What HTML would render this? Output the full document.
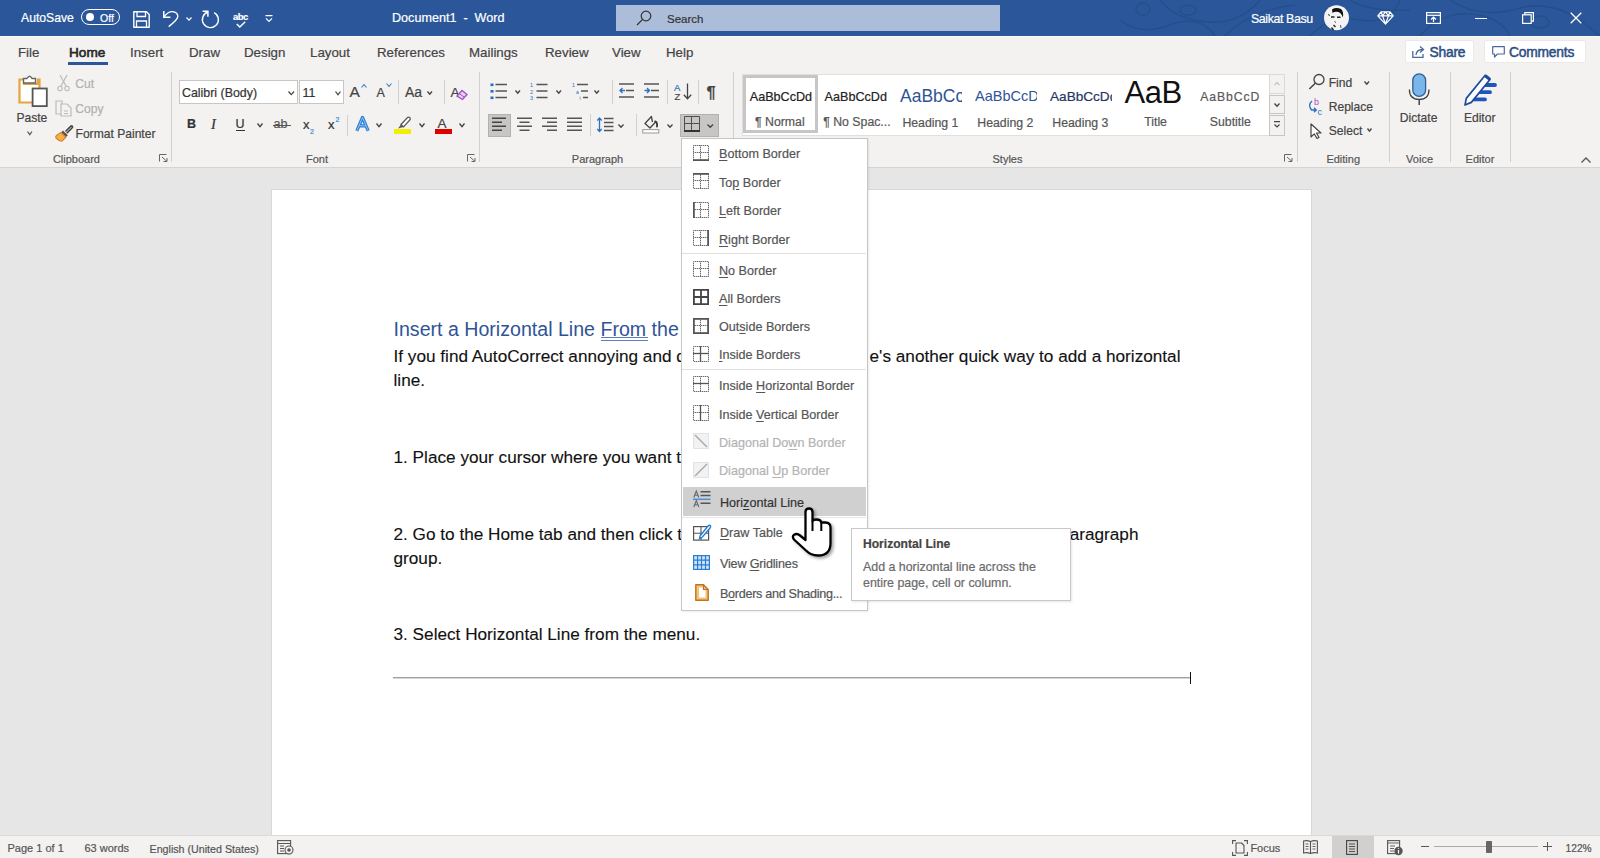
<!DOCTYPE html>
<html><head><meta charset="utf-8"><style>
html,body{margin:0;padding:0;}
body{width:1600px;height:858px;position:relative;overflow:hidden;background:#e6e6e6;font-family:"Liberation Sans",sans-serif;}
.t{position:absolute;white-space:nowrap;line-height:1;-webkit-text-stroke-width:0.2px;}
svg{overflow:visible;}
</style></head><body>
<div style="position:absolute;left:0px;top:0px;width:1600px;height:36px;background:#2b579a"></div>
<svg style="position:absolute;left:1120px;top:0px;" width="480" height="36" viewBox="0 0 480 36" fill="none"><g stroke="#1f4a86" stroke-width="1.5" fill="none" opacity="0.6"><ellipse cx="23" cy="9" rx="7" ry="6"/><ellipse cx="68" cy="10" rx="8" ry="5"/><path d="M0 20 Q20 36 50 25 Q80 14 95 36"/><path d="M40 0 Q55 20 90 22 Q120 24 140 0"/><path d="M105 36 Q130 10 175 5"/><path d="M190 36 Q210 15 240 20 Q270 25 280 0"/><path d="M300 36 Q320 12 350 14 Q380 16 390 36"/><path d="M330 0 Q360 20 400 8 Q430 0 460 20 Q470 28 480 36"/><ellipse cx="420" cy="22" rx="9" ry="6"/><path d="M230 0 Q250 12 290 10"/></g></svg>
<div style="position:absolute;left:0px;top:36px;width:1600px;height:131px;background:#f3f2f1"></div>
<div style="position:absolute;left:0px;top:36px;width:1600px;height:1px;background:#fbfbfb"></div>
<div style="position:absolute;left:0px;top:167px;width:1600px;height:1px;background:#d6d4d2"></div>
<div style="position:absolute;left:0px;top:168px;width:1600px;height:667px;background:#e6e6e6"></div>
<div style="position:absolute;left:272px;top:190px;width:1039px;height:645px;background:#fff;box-shadow:0 0 0 1px #d8d8d8"></div>
<div style="position:absolute;left:0px;top:835px;width:1600px;height:23px;background:#f3f2f1"></div>
<div class="t" style="left:21px;top:11.77px;font-size:12.2px;color:#fff;">AutoSave</div>
<div style="position:absolute;left:81px;top:8.5px;width:39px;height:16.5px;border:1.5px solid #fff;border-radius:9px;box-sizing:border-box"></div>
<div style="position:absolute;left:85.5px;top:12.8px;width:8px;height:8px;background:#fff;border-radius:50%"></div>
<div class="t" style="left:100px;top:12.61px;font-size:10.5px;color:#fff;">Off</div>
<div class="t" style="left:392px;top:11.63px;font-size:12.6px;color:#fff;">Document1&nbsp;&nbsp;-&nbsp;&nbsp;Word</div>
<div style="position:absolute;left:616px;top:5px;width:384px;height:26px;background:#acbdd9"></div>
<div class="t" style="left:667px;top:13.77px;font-size:11.5px;color:#333;">Search</div>
<div class="t" style="left:1251px;top:13.00px;font-size:12.4px;color:#fff;letter-spacing:-0.4px;">Saikat Basu</div>
<div class="t" style="left:18px;top:45.94px;font-size:13.3px;color:#444;">File</div>
<div class="t" style="left:130px;top:45.94px;font-size:13.3px;color:#444;">Insert</div>
<div class="t" style="left:189px;top:45.94px;font-size:13.3px;color:#444;">Draw</div>
<div class="t" style="left:244px;top:45.94px;font-size:13.3px;color:#444;">Design</div>
<div class="t" style="left:310px;top:45.94px;font-size:13.3px;color:#444;">Layout</div>
<div class="t" style="left:377px;top:45.94px;font-size:13.3px;color:#444;">References</div>
<div class="t" style="left:469px;top:45.94px;font-size:13.3px;color:#444;">Mailings</div>
<div class="t" style="left:545px;top:45.94px;font-size:13.3px;color:#444;">Review</div>
<div class="t" style="left:612px;top:45.94px;font-size:13.3px;color:#444;">View</div>
<div class="t" style="left:666px;top:45.94px;font-size:13.3px;color:#444;">Help</div>
<div class="t" style="left:69px;top:45.69px;font-size:13.6px;color:#262626;-webkit-text-stroke-width:0.6px;">Home</div>
<div style="position:absolute;left:68px;top:62px;width:40px;height:3px;background:#2b579a"></div>
<svg style="position:absolute;left:18px;top:75px;" width="30" height="32" viewBox="0 0 30 32" fill="none"><path d="M1.5 4.5 H6 V9 H20 V4.5 H21.5 V27.5 H1.5 Z" fill="#fff" stroke="#e8a33d" stroke-width="2.2"/>
<path d="M5.5 3.5 H9 Q11.5 -1 14 3.5 H17.5 V8 H5.5 Z" fill="#fff" stroke="#666" stroke-width="1.4"/>
<rect x="14.6" y="13.5" width="14.2" height="17.6" fill="#fff" stroke="#555" stroke-width="1.8"/></svg>
<div class="t" style="left:16.4px;top:112.06px;font-size:12.1px;color:#444;">Paste</div>
<svg style="position:absolute;left:27px;top:131px;" width="5.5" height="4" viewBox="0 0 5.5 4" fill="none"><path d="M0.5 0.5 L2.75 3.7 L5.0 0.5" stroke="#555" stroke-width="1.2"/></svg>
<svg style="position:absolute;left:57px;top:74px;" width="13" height="18" viewBox="0 0 13 18" fill="none"><path d="M3 1 L9 12 M10 1 L4 12" stroke="#bbb" stroke-width="1.2"/><circle cx="3" cy="14.5" r="2.2" stroke="#bbb" stroke-width="1.1"/><circle cx="10" cy="14.5" r="2.2" stroke="#bbb" stroke-width="1.1"/></svg>
<div class="t" style="left:75.3px;top:78.26px;font-size:12.1px;color:#b0b0b0;">Cut</div>
<svg style="position:absolute;left:55px;top:100px;" width="17" height="17" viewBox="0 0 17 17" fill="none"><path d="M1 1 H7 V14 H1 Z" stroke="#bbb" stroke-width="1.2"/><path d="M6 4 H12 L16 8 V16 H6 Z" fill="#f3f2f1" stroke="#bbb" stroke-width="1.2"/><path d="M9 11 H13 M9 13.5 H13" stroke="#bbb" stroke-width="1"/></svg>
<div class="t" style="left:75.3px;top:102.76px;font-size:12.1px;color:#b0b0b0;">Copy</div>
<svg style="position:absolute;left:55px;top:124.5px;" width="18" height="17" viewBox="0 0 18 17" fill="none"><path d="M10.5 6.5 L15.8 1.2 Q17 0.5 17.5 1.5 Q17.8 2.3 17 3 L11.8 8.2" stroke="#444" stroke-width="1.6" fill="none"/><path d="M8 5.5 L12.8 10.3 L10.8 12.3 L6 7.5 Z" fill="#555"/><path d="M6 7.5 L10.8 12.3 L7 16 Q4.5 16.5 1 13 Q0.3 11.5 1.5 10.5 Z" fill="#f7b04a" stroke="#d9822b" stroke-width="1.2" stroke-linejoin="round"/></svg>
<div class="t" style="left:75.5px;top:128.46px;font-size:12.1px;color:#444;">Format Painter</div>
<div class="t" style="left:52.9px;top:154.39px;font-size:11px;color:#555;">Clipboard</div>
<svg style="position:absolute;left:158.5px;top:154px;" width="9" height="8" viewBox="0 0 9 8" fill="none"><path d="M0.5 7.5 V0.5 H7.5" stroke="#666" stroke-width="1"/><path d="M3 3 L8 7.5 M8 4 V7.5 H4.5" stroke="#666" stroke-width="1"/></svg>
<div style="position:absolute;left:171px;top:72px;width:1px;height:90px;background:#d2d0ce"></div>
<div style="position:absolute;left:179px;top:80px;width:118.5px;height:24px;background:#fff;border:1px solid #c8c6c4;box-sizing:border-box"></div>
<div class="t" style="left:182px;top:86.80px;font-size:12.4px;color:#333;">Calibri (Body)</div>
<svg style="position:absolute;left:288px;top:91px;" width="6.5" height="4" viewBox="0 0 6.5 4" fill="none"><path d="M0.5 0.5 L3.25 3.7 L6.0 0.5" stroke="#444" stroke-width="1.2"/></svg>
<div style="position:absolute;left:299px;top:80px;width:45px;height:24px;background:#fff;border:1px solid #c8c6c4;box-sizing:border-box"></div>
<div class="t" style="left:302.5px;top:86.80px;font-size:12.4px;color:#333;">11</div>
<svg style="position:absolute;left:335px;top:91px;" width="6" height="4" viewBox="0 0 6 4" fill="none"><path d="M0.5 0.5 L3.0 3.7 L5.5 0.5" stroke="#444" stroke-width="1.2"/></svg>
<div class="t" style="left:349.5px;top:84.18px;font-size:15.5px;color:#444;">A</div>
<svg style="position:absolute;left:361px;top:83.5px;" width="6" height="4" viewBox="0 0 6 4" fill="none"><path d="M0.5 3.5 L3 0.7 L5.5 3.5" stroke="#3b7fc4" stroke-width="1.1"/></svg>
<div class="t" style="left:376.5px;top:86.72px;font-size:12.5px;color:#444;">A</div>
<svg style="position:absolute;left:386px;top:83px;" width="6" height="4" viewBox="0 0 6 4" fill="none"><path d="M0.5 0.5 L3 3.3 L5.5 0.5" stroke="#3b7fc4" stroke-width="1.1"/></svg>
<div style="position:absolute;left:398px;top:80px;width:1px;height:23.5px;background:#d2d0ce"></div>
<div class="t" style="left:405px;top:85.45px;font-size:14px;color:#444;">Aa</div>
<svg style="position:absolute;left:427px;top:90.5px;" width="5.5" height="3.5" viewBox="0 0 5.5 3.5" fill="none"><path d="M0.5 0.5 L2.75 3.2 L5.0 0.5" stroke="#444" stroke-width="1.35"/></svg>
<div style="position:absolute;left:443.5px;top:80px;width:1px;height:23.5px;background:#d2d0ce"></div>
<div class="t" style="left:450.5px;top:85.87px;font-size:13.5px;color:#444;">A</div>
<svg style="position:absolute;left:456px;top:89px;" width="12" height="11" viewBox="0 0 12 11" fill="none"><path d="M1 7 L6 1.5 L11 5.5 L6.5 10.5 Z" fill="#e8d0f0" stroke="#a050c0" stroke-width="1.3"/><path d="M3.5 4.8 L8.5 8.3" stroke="#a050c0" stroke-width="1"/></svg>
<div class="t" style="left:187px;top:118.42px;font-size:12.5px;color:#333;font-weight:700;">B</div>
<div class="t" style="left:211px;top:116.73px;font-size:14.5px;color:#333;font-family:'Liberation Serif';font-style:italic;">I</div>
<div class="t" style="left:235.5px;top:118.42px;font-size:12.5px;color:#333;">U</div>
<div style="position:absolute;left:235.5px;top:130px;width:9.5px;height:1.2px;background:#333"></div>
<svg style="position:absolute;left:256.5px;top:123px;" width="6" height="4" viewBox="0 0 6 4" fill="none"><path d="M0.5 0.5 L3.0 3.7 L5.5 0.5" stroke="#444" stroke-width="1.35"/></svg>
<div class="t" style="left:273.5px;top:117.62px;font-size:12.5px;color:#555;">ab</div>
<div style="position:absolute;left:272.5px;top:124.8px;width:18px;height:1.2px;background:#555"></div>
<div class="t" style="left:303px;top:118.00px;font-size:13px;color:#333;">x</div>
<div class="t" style="left:310px;top:128.27px;font-size:7px;color:#3b8ed0;">2</div>
<div class="t" style="left:328px;top:118.00px;font-size:13px;color:#333;">x</div>
<div class="t" style="left:335.5px;top:115.77px;font-size:7px;color:#3b8ed0;">2</div>
<div style="position:absolute;left:347px;top:114.5px;width:1px;height:21.5px;background:#d2d0ce"></div>
<svg style="position:absolute;left:355px;top:116px;" width="15" height="16" viewBox="0 0 15 16" fill="none"><path d="M1.8 14.8 L7.5 1.5 L13.2 14.8 M4.2 9.8 H10.8" stroke="#2b7cd3" stroke-width="3.2" stroke-linejoin="round"/><path d="M1.8 14.8 L7.5 1.5 L13.2 14.8 M4.2 9.8 H10.8" stroke="#9ccbf5" stroke-width="0.9" stroke-linejoin="round"/></svg>
<svg style="position:absolute;left:376px;top:123px;" width="6" height="4" viewBox="0 0 6 4" fill="none"><path d="M0.5 0.5 L3.0 3.7 L5.5 0.5" stroke="#444" stroke-width="1.35"/></svg>
<svg style="position:absolute;left:395px;top:116px;" width="16" height="13" viewBox="0 0 16 13" fill="none"><path d="M6 8.5 L12.5 1.5 Q14 0.5 15 1.8 Q15.8 3 14.8 4 L8.5 11 Z" fill="#fff" stroke="#555" stroke-width="1.2"/><path d="M6 8.5 L8.5 11 L3 12.5 Z" fill="#555"/></svg>
<div style="position:absolute;left:393.5px;top:129px;width:17.5px;height:4.5px;background:#f2ee00"></div>
<svg style="position:absolute;left:418.5px;top:123px;" width="6" height="4" viewBox="0 0 6 4" fill="none"><path d="M0.5 0.5 L3.0 3.7 L5.5 0.5" stroke="#444" stroke-width="1.35"/></svg>
<div class="t" style="left:437.5px;top:116.67px;font-size:13.5px;color:#444;">A</div>
<div style="position:absolute;left:435px;top:129px;width:17px;height:4.5px;background:#e00000"></div>
<svg style="position:absolute;left:459px;top:123px;" width="6" height="4" viewBox="0 0 6 4" fill="none"><path d="M0.5 0.5 L3.0 3.7 L5.5 0.5" stroke="#444" stroke-width="1.35"/></svg>
<div class="t" style="left:306px;top:154.39px;font-size:11px;color:#555;">Font</div>
<svg style="position:absolute;left:466.5px;top:154px;" width="9" height="8" viewBox="0 0 9 8" fill="none"><path d="M0.5 7.5 V0.5 H7.5" stroke="#666" stroke-width="1"/><path d="M3 3 L8 7.5 M8 4 V7.5 H4.5" stroke="#666" stroke-width="1"/></svg>
<div style="position:absolute;left:478.5px;top:72px;width:1px;height:90px;background:#d2d0ce"></div>
<svg style="position:absolute;left:490px;top:82px;" width="18" height="17" viewBox="0 0 18 17" fill="none"><rect x="0.5" y="1.5" width="3" height="2.6" fill="#2a6fc0"/><rect x="0.5" y="8" width="3" height="2.6" fill="#2a6fc0"/><rect x="0.5" y="14.5" width="3" height="2.6" fill="#2a6fc0"/><path d="M5.5 2.5 H17 M5.5 9 H17 M5.5 15.5 H17" stroke="#555" stroke-width="1.3"/></svg>
<svg style="position:absolute;left:515px;top:90px;" width="5.5" height="3.5" viewBox="0 0 5.5 3.5" fill="none"><path d="M0.5 0.5 L2.75 3.2 L5.0 0.5" stroke="#444" stroke-width="1.35"/></svg>
<svg style="position:absolute;left:530px;top:82px;" width="18" height="17" viewBox="0 0 18 17" fill="none"><text x="0" y="5" font-size="5.5" fill="#2a6fc0" font-family="Liberation Sans">1</text><text x="0" y="11.5" font-size="5.5" fill="#2a6fc0" font-family="Liberation Sans">2</text><text x="0" y="18" font-size="5.5" fill="#2a6fc0" font-family="Liberation Sans">3</text><path d="M6.5 2.5 H17.5 M6.5 9 H17.5 M6.5 15.5 H17.5" stroke="#555" stroke-width="1.3"/></svg>
<svg style="position:absolute;left:555.5px;top:90px;" width="5.5" height="3.5" viewBox="0 0 5.5 3.5" fill="none"><path d="M0.5 0.5 L2.75 3.2 L5.0 0.5" stroke="#444" stroke-width="1.35"/></svg>
<svg style="position:absolute;left:572px;top:82px;" width="17" height="18" viewBox="0 0 17 18" fill="none"><text x="0" y="5" font-size="5" fill="#2a6fc0" font-family="Liberation Sans">1</text><text x="4" y="11.5" font-size="5" fill="#2a6fc0" font-family="Liberation Sans">a</text><text x="7.5" y="18" font-size="5" fill="#2a6fc0" font-family="Liberation Sans">i</text><path d="M5 2.5 H16 M9 9 H16 M11 15.5 H16" stroke="#555" stroke-width="1.3"/></svg>
<svg style="position:absolute;left:594px;top:90px;" width="5.5" height="3.5" viewBox="0 0 5.5 3.5" fill="none"><path d="M0.5 0.5 L2.75 3.2 L5.0 0.5" stroke="#444" stroke-width="1.35"/></svg>
<div style="position:absolute;left:611.5px;top:80px;width:1px;height:24px;background:#d2d0ce"></div>
<svg style="position:absolute;left:619px;top:83px;" width="16" height="15" viewBox="0 0 16 15" fill="none"><path d="M0 1 H15 M7 7.5 H15 M0 14 H15" stroke="#555" stroke-width="1.4"/><path d="M6 7.5 H1 M3.5 5 L1 7.5 L3.5 10" stroke="#2a6fc0" stroke-width="1.3"/></svg>
<svg style="position:absolute;left:644px;top:83px;" width="16" height="15" viewBox="0 0 16 15" fill="none"><path d="M0 1 H15 M7 7.5 H15 M0 14 H15" stroke="#555" stroke-width="1.4"/><path d="M0.5 7.5 H5.5 M3 5 L5.5 7.5 L3 10" stroke="#2a6fc0" stroke-width="1.3"/></svg>
<div style="position:absolute;left:667px;top:80px;width:1px;height:24px;background:#d2d0ce"></div>
<div class="t" style="left:674px;top:83.16px;font-size:9.5px;color:#2a6fc0;">A</div>
<div class="t" style="left:674.5px;top:92.46px;font-size:9.5px;color:#444;">Z</div>
<svg style="position:absolute;left:683px;top:83px;" width="9" height="17" viewBox="0 0 9 17" fill="none"><path d="M4.5 0.5 V15.5 M0.8 11.8 L4.5 15.8 L8.2 11.8" stroke="#444" stroke-width="1.3"/></svg>
<div style="position:absolute;left:698px;top:80px;width:1px;height:24px;background:#d2d0ce"></div>
<div class="t" style="left:706.5px;top:84.23px;font-size:16.5px;color:#444;font-weight:700;">&para;</div>
<div style="position:absolute;left:487.5px;top:113.5px;width:23.5px;height:23.5px;background:#c8c6c4;border:1px solid #b3b0ad;box-sizing:border-box"></div>
<svg style="position:absolute;left:492px;top:117px;" width="15" height="14" viewBox="0 0 15 14" fill="none"><path d="M0 1.3 H14 M0 5.3 H10 M0 9.3 H14 M0 13.3 H10" stroke="#444" stroke-width="1.4"/></svg>
<svg style="position:absolute;left:516.5px;top:117px;" width="15" height="14" viewBox="0 0 15 14" fill="none"><path d="M0 1.3 H15 M2.5 5.3 H12.5 M0 9.3 H15 M2.5 13.3 H12.5" stroke="#555" stroke-width="1.4"/></svg>
<svg style="position:absolute;left:541.5px;top:117px;" width="15" height="14" viewBox="0 0 15 14" fill="none"><path d="M0 1.3 H15 M5 5.3 H15 M0 9.3 H15 M5 13.3 H15" stroke="#555" stroke-width="1.4"/></svg>
<svg style="position:absolute;left:567px;top:117px;" width="15" height="14" viewBox="0 0 15 14" fill="none"><path d="M0 1.3 H15 M0 5.3 H15 M0 9.3 H15 M0 13.3 H15" stroke="#555" stroke-width="1.4"/></svg>
<div style="position:absolute;left:590px;top:113.5px;width:1px;height:22.0px;background:#d2d0ce"></div>
<svg style="position:absolute;left:597px;top:117px;" width="17" height="16" viewBox="0 0 17 16" fill="none"><path d="M2.5 1 V14.5 M0.3 3.5 L2.5 1 L4.7 3.5 M0.3 12 L2.5 14.5 L4.7 12" stroke="#2a6fc0" stroke-width="1.3"/><path d="M7 1.5 H16.5 M7 5.5 H16.5 M7 9.5 H16.5 M7 13.5 H16.5" stroke="#555" stroke-width="1.4"/></svg>
<svg style="position:absolute;left:618px;top:124px;" width="6" height="3.5" viewBox="0 0 6 3.5" fill="none"><path d="M0.5 0.5 L3.0 3.2 L5.5 0.5" stroke="#444" stroke-width="1.35"/></svg>
<div style="position:absolute;left:635.5px;top:113.5px;width:1px;height:22.0px;background:#d2d0ce"></div>
<svg style="position:absolute;left:642px;top:115px;" width="17" height="19" viewBox="0 0 17 19" fill="none"><path d="M10.5 7 L9.4 1.5 L3 8.5 L8 13 L13.6 7" stroke="#444" stroke-width="1.3" stroke-linejoin="round"/><path d="M13.2 6.3 Q15.5 7 15 11.5" stroke="#333" stroke-width="1.8" stroke-linecap="round"/><rect x="0.8" y="14.6" width="16" height="3.4" fill="#fff" stroke="#999" stroke-width="1"/></svg>
<svg style="position:absolute;left:667px;top:124px;" width="6" height="3.5" viewBox="0 0 6 3.5" fill="none"><path d="M0.5 0.5 L3.0 3.2 L5.5 0.5" stroke="#444" stroke-width="1.35"/></svg>
<div style="position:absolute;left:680px;top:113.5px;width:39px;height:23.5px;background:#c8c6c4;border:1px solid #b3b0ad;box-sizing:border-box"></div>
<svg style="position:absolute;left:684px;top:116px;" width="16" height="16" viewBox="0 0 16 16" fill="none"><path d="M0.5 0.5 H15.5 V15.5 M0.5 0.5 V15.5 M7.5 0.5 V15 M0.5 7.5 H15.5" stroke="#505050" stroke-width="1"/><path d="M0 15 H16" stroke="#333" stroke-width="2"/></svg>
<svg style="position:absolute;left:707px;top:124px;" width="6.5" height="3.5" viewBox="0 0 6.5 3.5" fill="none"><path d="M0.5 0.5 L3.25 3.2 L6.0 0.5" stroke="#444" stroke-width="1.35"/></svg>
<div class="t" style="left:571.8px;top:154.39px;font-size:11px;color:#555;">Paragraph</div>
<div style="position:absolute;left:732.5px;top:72px;width:1px;height:90px;background:#d2d0ce"></div>
<div style="position:absolute;left:741.5px;top:73.5px;width:528px;height:62px;background:#fff;border:1px solid #e1dfdd;box-sizing:border-box"></div>
<div style="position:absolute;left:743px;top:75px;width:75px;height:58px;background:#fff;border:3px solid #c6c6c6;box-sizing:border-box"></div>
<div class="t" style="left:749.8px;top:90.63px;font-size:12.6px;color:#222;">AaBbCcDd</div>
<div class="t" style="left:755px;top:115.99px;font-size:12.3px;color:#555;">&para; Normal</div>
<div class="t" style="left:824.6px;top:90.63px;font-size:12.6px;color:#222;">AaBbCcDd</div>
<div class="t" style="left:823.2px;top:115.99px;font-size:12.3px;color:#555;">&para; No Spac...</div>
<div style="position:absolute;left:900px;top:80px;width:62px;height:28px;overflow:hidden"><div class="t" style="left:0;top:8.19px;font-size:17.5px;color:#2f5496;-webkit-text-stroke-width:0">AaBbCcDd</div></div>
<div style="position:absolute;left:975px;top:80px;width:62px;height:28px;overflow:hidden"><div class="t" style="left:0;top:9.43px;font-size:14.5px;color:#2f5496;-webkit-text-stroke-width:0">AaBbCcDd</div></div>
<div style="position:absolute;left:1050px;top:80px;width:62px;height:28px;overflow:hidden"><div class="t" style="left:0;top:10.19px;font-size:13.6px;color:#1f3763">AaBbCcDd</div></div>
<div class="t" style="left:902.4px;top:116.79px;font-size:12.3px;color:#555;">Heading 1</div>
<div class="t" style="left:977.3px;top:116.79px;font-size:12.3px;color:#555;">Heading 2</div>
<div class="t" style="left:1052.3px;top:116.79px;font-size:12.3px;color:#555;">Heading 3</div>
<div style="position:absolute;left:1120px;top:81px;width:70px;height:26px;overflow:hidden"><div class="t" style="left:4.5px;top:-3.74px;font-size:31px;color:#111;letter-spacing:-0.5px;-webkit-text-stroke-width:0">AaB</div></div>
<div class="t" style="left:1144.2px;top:115.89px;font-size:12.3px;color:#555;">Title</div>
<div class="t" style="left:1200.3px;top:91.07px;font-size:12.2px;color:#595959;letter-spacing:0.9px;">AaBbCcD</div>
<div class="t" style="left:1209.8px;top:115.89px;font-size:12.3px;color:#555;">Subtitle</div>
<div style="position:absolute;left:1269px;top:73.5px;width:16px;height:20.5px;background:#f3f2f1;border:1px solid #dcdad8;box-sizing:border-box"></div>
<svg style="position:absolute;left:1274px;top:82px;" width="6" height="3.5" viewBox="0 0 6 3.5" fill="none"><path d="M0.5 3 L3 0.5 L5.5 3" stroke="#c0c0c0" stroke-width="1.1"/></svg>
<div style="position:absolute;left:1269px;top:95px;width:16px;height:19px;background:#f3f2f1;border:1px solid #c8c6c4;box-sizing:border-box"></div>
<svg style="position:absolute;left:1274px;top:103px;" width="6" height="3.5" viewBox="0 0 6 3.5" fill="none"><path d="M0.5 0.5 L3.0 3.2 L5.5 0.5" stroke="#444" stroke-width="1.3"/></svg>
<div style="position:absolute;left:1269px;top:115px;width:16px;height:21px;background:#f3f2f1;border:1px solid #c8c6c4;box-sizing:border-box"></div>
<svg style="position:absolute;left:1274px;top:120.5px;" width="6" height="8" viewBox="0 0 6 8" fill="none"><path d="M0 0.6 H6 M0.5 3.5 L3 6 L5.5 3.5" stroke="#444" stroke-width="1.2"/></svg>
<div class="t" style="left:992.5px;top:154.39px;font-size:11px;color:#555;">Styles</div>
<svg style="position:absolute;left:1284px;top:154px;" width="9" height="8" viewBox="0 0 9 8" fill="none"><path d="M0.5 7.5 V0.5 H7.5" stroke="#666" stroke-width="1"/><path d="M3 3 L8 7.5 M8 4 V7.5 H4.5" stroke="#666" stroke-width="1"/></svg>
<div style="position:absolute;left:1296.5px;top:72px;width:1px;height:90px;background:#d2d0ce"></div>
<svg style="position:absolute;left:1308px;top:73px;" width="17" height="17" viewBox="0 0 17 17" fill="none"><circle cx="11" cy="6.5" r="5" stroke="#444" stroke-width="1.3"/><path d="M7.3 10.2 L1.3 16" stroke="#444" stroke-width="1.5"/></svg>
<div class="t" style="left:1328.7px;top:77.06px;font-size:12.1px;color:#444;">Find</div>
<svg style="position:absolute;left:1364px;top:80.5px;" width="5.5" height="3.5" viewBox="0 0 5.5 3.5" fill="none"><path d="M0.5 0.5 L2.75 3.2 L5.0 0.5" stroke="#444" stroke-width="1.35"/></svg>
<svg style="position:absolute;left:1307px;top:97px;" width="18" height="18" viewBox="0 0 18 18" fill="none"><text x="7" y="8" font-size="9" fill="#b04fc0" font-family="Liberation Sans">b</text><text x="10.5" y="17.5" font-size="9" fill="#2a6fc0" font-family="Liberation Sans">c</text><path d="M5 4 Q0.5 8 4.5 13 H9 M7 10.8 L9.3 13 L7 15.2" stroke="#2a6fc0" stroke-width="1.3"/></svg>
<div class="t" style="left:1328.7px;top:101.06px;font-size:12.1px;color:#444;">Replace</div>
<svg style="position:absolute;left:1309.5px;top:122.5px;" width="12" height="16" viewBox="0 0 12 16" fill="none"><path d="M1 1 L1 14 L4.2 10.8 L7 15.5 L9 14.5 L6.5 10 L11 10 Z" fill="#fff" stroke="#444" stroke-width="1.2" stroke-linejoin="round"/></svg>
<div class="t" style="left:1328.7px;top:125.16px;font-size:12.1px;color:#444;">Select</div>
<svg style="position:absolute;left:1366.5px;top:128px;" width="5" height="3.5" viewBox="0 0 5 3.5" fill="none"><path d="M0.5 0.5 L2.5 3.2 L4.5 0.5" stroke="#444" stroke-width="1.35"/></svg>
<div class="t" style="left:1326.4px;top:154.39px;font-size:11px;color:#555;">Editing</div>
<div style="position:absolute;left:1388.5px;top:72px;width:1px;height:90px;background:#d2d0ce"></div>
<svg style="position:absolute;left:1408px;top:73px;" width="22" height="33" viewBox="0 0 22 33" fill="none"><rect x="4.8" y="0.8" width="12.8" height="22.6" rx="6.4" fill="#7ab6ea" stroke="#2f5f98" stroke-width="1.3"/><path d="M1.4 16.5 Q1.4 26.4 11.2 26.4 Q21 26.4 21 16.5" stroke="#444" stroke-width="1.3"/><path d="M11.2 26.4 V32" stroke="#444" stroke-width="1.5"/></svg>
<div class="t" style="left:1399.8px;top:112.06px;font-size:12.1px;color:#444;">Dictate</div>
<div class="t" style="left:1406.1px;top:154.39px;font-size:11px;color:#555;">Voice</div>
<div style="position:absolute;left:1449.5px;top:72px;width:1px;height:90px;background:#d2d0ce"></div>
<svg style="position:absolute;left:1463px;top:73px;" width="34" height="34" viewBox="0 0 34 34" fill="none"><path d="M20 12 H32 M14.5 19.2 H27 M9 26.4 H22" stroke="#1f55c0" stroke-width="3.8" stroke-linecap="round"/><path d="M2 32 L3.3 25.4 L22 2.5 L27 6.5 L8.3 29.4 Z" fill="#fff" stroke="#1c4a9e" stroke-width="1.7" stroke-linejoin="round"/><path d="M22 2.5 L27 6.5" stroke="#1c4a9e" stroke-width="3"/></svg>
<div class="t" style="left:1463.9px;top:112.06px;font-size:12.1px;color:#444;">Editor</div>
<div class="t" style="left:1465.6px;top:154.39px;font-size:11px;color:#555;">Editor</div>
<div style="position:absolute;left:1509.5px;top:72px;width:1px;height:90px;background:#d2d0ce"></div>
<svg style="position:absolute;left:1581px;top:157px;" width="10" height="6" viewBox="0 0 10 6" fill="none"><path d="M0.5 5.5 L5 1 L9.5 5.5" stroke="#555" stroke-width="1.3"/></svg>
<div style="position:absolute;left:1405px;top:40px;width:69px;height:23px;background:#fff;border:1px solid #ebeae9;box-sizing:border-box;border-radius:2px"></div>
<svg style="position:absolute;left:1412px;top:45px;" width="14" height="13" viewBox="0 0 14 13" fill="none"><path d="M0.8 6 V12.3 H11 V9" stroke="#4a6a9e" stroke-width="1.3"/><path d="M4 10 Q4.5 4.5 10.5 4.5 M8 1.5 L11.5 4.5 L8 7.5" stroke="#4a6a9e" stroke-width="1.3"/></svg>
<div class="t" style="left:1429.5px;top:45.52px;font-size:13.8px;color:#2d4e84;-webkit-text-stroke-width:0.5px;letter-spacing:-0.2px;">Share</div>
<div style="position:absolute;left:1484px;top:40px;width:102px;height:23px;background:#fff;border:1px solid #ebeae9;box-sizing:border-box;border-radius:2px"></div>
<svg style="position:absolute;left:1492px;top:46px;" width="13" height="12" viewBox="0 0 13 12" fill="none"><path d="M0.7 0.7 H12.3 V8 H5.5 L2.5 11 V8 H0.7 Z" stroke="#4a6a9e" stroke-width="1.2" stroke-linejoin="round"/></svg>
<div class="t" style="left:1509px;top:45.52px;font-size:13.8px;color:#2d4e84;-webkit-text-stroke-width:0.5px;letter-spacing:-0.2px;">Comments</div>
<svg style="position:absolute;left:133px;top:10.5px;" width="17" height="17" viewBox="0 0 17 17" fill="none"><path d="M0.8 0.8 H13.5 L16.2 3.5 V16.2 H0.8 Z" stroke="#fff" stroke-width="1.4" stroke-linejoin="round"/><path d="M4 0.8 V5.5 H12.5 V0.8" stroke="#fff" stroke-width="1.3"/><path d="M3.5 16.2 V10 H13.5 V16.2" stroke="#fff" stroke-width="1.3"/></svg>
<svg style="position:absolute;left:162px;top:11px;" width="17" height="17" viewBox="0 0 17 17" fill="none"><path d="M1.8 6.1 Q6 0.4 10.4 0.6 Q15.8 1 15.8 5.5 Q15.8 8.5 6.7 15.6" stroke="#fff" stroke-width="1.4"/><path d="M1.8 0 V6.3 H8.4" stroke="#fff" stroke-width="1.5"/></svg>
<svg style="position:absolute;left:186px;top:16.5px;" width="6" height="3.5" viewBox="0 0 6 3.5" fill="none"><path d="M0.5 0.5 L3.0 3.2 L5.5 0.5" stroke="#fff" stroke-width="1.2"/></svg>
<svg style="position:absolute;left:201px;top:10px;" width="19" height="19" viewBox="0 0 19 19" fill="none"><path d="M6.93 2 A8 8 0 1 0 13.15 2.54" stroke="#fff" stroke-width="1.4"/><path d="M1.6 1.2 H6.9 V6.7" stroke="#fff" stroke-width="1.5"/></svg>
<div class="t" style="left:233px;top:12.16px;font-size:9.5px;color:#fff;font-weight:700;letter-spacing:-0.5px;">abc</div>
<svg style="position:absolute;left:236px;top:21px;" width="10" height="7" viewBox="0 0 10 7" fill="none"><path d="M0.8 3 L3.8 6 L9.2 0.8" stroke="#fff" stroke-width="1.5"/></svg>
<svg style="position:absolute;left:265px;top:15px;" width="8" height="7" viewBox="0 0 8 7" fill="none"><path d="M0.5 0.7 H7.5 M1 3.3 L4 6.3 L7 3.3" stroke="#fff" stroke-width="1.2"/></svg>
<svg style="position:absolute;left:636px;top:10px;" width="16" height="16" viewBox="0 0 16 16" fill="none"><circle cx="10" cy="6" r="4.8" stroke="#333" stroke-width="1.2"/><path d="M6.6 9.4 L1 15" stroke="#333" stroke-width="1.3"/></svg>
<svg style="position:absolute;left:1324px;top:5px;" width="26" height="26" viewBox="0 0 26 26" fill="none"><circle cx="12.5" cy="12.7" r="12.5" fill="#f4f4f4"/><path d="M8 4.5 Q12 1.8 17 4 Q20 6.5 18.8 12.5 Q17.5 8 14.5 7 Q10.5 6.2 8.5 8 Z" fill="#111"/><path d="M4.5 9 L5.5 11" stroke="#333" stroke-width="1"/><path d="M7 12 H10.5 M13 12.2 H16.5" stroke="#222" stroke-width="1.4"/><path d="M10.5 16.5 L12 17.5" stroke="#444" stroke-width="1"/><path d="M9.5 20 L11.5 22" stroke="#333" stroke-width="1.6"/><path d="M7.5 22.5 L9.5 25" stroke="#222" stroke-width="1.4"/><path d="M16.5 20 L17 23" stroke="#555" stroke-width="1"/></svg>
<svg style="position:absolute;left:1377px;top:10.5px;" width="17" height="14" viewBox="0 0 17 14" fill="none"><path d="M4 0.8 H13 L16.2 4.8 L8.5 13.2 L0.8 4.8 Z M0.8 4.8 H16.2 M5.5 4.8 L8.5 13 L11.5 4.8 M4 0.8 L5.5 4.8 L8.5 0.8 L11.5 4.8 L13 0.8" stroke="#fff" stroke-width="1.2" stroke-linejoin="round"/></svg>
<svg style="position:absolute;left:1426px;top:12px;" width="15" height="12" viewBox="0 0 15 12" fill="none"><rect x="0.6" y="0.6" width="13.8" height="10.8" stroke="#fff" stroke-width="1.2"/><path d="M0.6 3.3 H14.4" stroke="#fff" stroke-width="1.2"/><path d="M7.5 10 V5.5 M5 7.5 L7.5 5 L10 7.5" stroke="#fff" stroke-width="1.2"/></svg>
<div style="position:absolute;left:1475px;top:17.5px;width:12px;height:1.2px;background:#fff"></div>
<svg style="position:absolute;left:1522px;top:12px;" width="12" height="12" viewBox="0 0 12 12" fill="none"><rect x="0.6" y="2.8" width="8.6" height="8.6" stroke="#fff" stroke-width="1.2"/><path d="M2.8 2.8 V0.6 H11.4 V9.2 H9.2" stroke="#fff" stroke-width="1.2"/></svg>
<svg style="position:absolute;left:1570px;top:12px;" width="12" height="12" viewBox="0 0 12 12" fill="none"><path d="M0.7 0.7 L11.3 11.3 M11.3 0.7 L0.7 11.3" stroke="#fff" stroke-width="1.3"/></svg>
<div class="t" style="left:393.5px;top:319.71px;font-size:19.6px;color:#2f5496;-webkit-text-stroke-width:0;">Insert a Horizontal Line From the Ribbon</div>
<div style="position:absolute;left:601px;top:337px;width:47px;height:1.2px;background:#5b7fc0"></div>
<div style="position:absolute;left:601px;top:340px;width:47px;height:1.2px;background:#5b7fc0"></div>
<div class="t" style="left:393.5px;top:348.14px;font-size:17.2px;color:#111;-webkit-text-stroke:0.12px #111;">If you find AutoCorrect annoying and disabled it, her</div>
<div class="t" style="right:419.5px;top:348.14px;font-size:17.2px;color:#111;-webkit-text-stroke:0.12px #111;">e's another quick way to add a horizontal</div>
<div class="t" style="left:393.5px;top:372.14px;font-size:17.2px;color:#111;-webkit-text-stroke:0.12px #111;">line.</div>
<div class="t" style="left:393.5px;top:448.54px;font-size:17.2px;color:#111;-webkit-text-stroke:0.12px #111;">1. Place your cursor where you want the line.</div>
<div class="t" style="left:393.5px;top:526.14px;font-size:17.2px;color:#111;-webkit-text-stroke:0.12px #111;">2. Go to the Home tab and then click the Borders dropdown in the P</div>
<div class="t" style="right:461.5px;top:526.14px;font-size:17.2px;color:#111;-webkit-text-stroke:0.12px #111;">aragraph</div>
<div class="t" style="left:393.5px;top:549.74px;font-size:17.2px;color:#111;-webkit-text-stroke:0.12px #111;">group.</div>
<div class="t" style="left:393.5px;top:626.14px;font-size:17.2px;color:#111;-webkit-text-stroke:0.12px #111;">3. Select Horizontal Line from the menu.</div>
<div style="position:absolute;left:393px;top:677px;width:797px;height:1px;background:#a0a0a0"></div>
<div style="position:absolute;left:393px;top:678px;width:797px;height:1px;background:#d8d8d8"></div>
<div style="position:absolute;left:1189.5px;top:672px;width:1.6px;height:12px;background:#111"></div>
<div style="position:absolute;left:681px;top:137.5px;width:186.5px;height:473px;background:#fff;border:1px solid #c6c6c6;box-sizing:border-box;box-shadow:1px 1px 2px rgba(0,0,0,0.08)"></div>
<div style="position:absolute;left:682px;top:253px;width:184px;height:1px;background:#e1dfdd"></div>
<div style="position:absolute;left:682px;top:368.5px;width:184px;height:1px;background:#e1dfdd"></div>
<div style="position:absolute;left:682.5px;top:487px;width:183px;height:28.5px;background:#d0d0d0"></div>
<div style="position:absolute;left:682px;top:517px;width:184px;height:1px;background:#e8e6e4"></div>
<svg style="position:absolute;left:693px;top:145px;" width="16" height="16" viewBox="0 0 16 16" fill="none"><path d="M0.5 0.5 H15.5 V15.5 H0.5 Z M7.5 0.5 V15.5 M0.5 7.5 H15.5" stroke="#c4c4c4" stroke-width="1"/><path d="M0.5 0.5 H15.5 V15.5 H0.5 Z M7.5 0.5 V15.5 M0.5 7.5 H15.5" stroke="#6a6a6a" stroke-width="1" stroke-dasharray="1 1" stroke-dashoffset="0.5"/><path d="M0 15.1 H16" stroke="#555" stroke-width="1.8"/></svg>
<div class="t" style="left:719px;top:148.43px;font-size:12.6px;color:#555;"><span style="text-decoration:underline;text-underline-offset:2px">B</span>ottom Border</div>
<svg style="position:absolute;left:693px;top:173px;" width="16" height="16" viewBox="0 0 16 16" fill="none"><path d="M0.5 0.5 H15.5 V15.5 H0.5 Z M7.5 0.5 V15.5 M0.5 7.5 H15.5" stroke="#c4c4c4" stroke-width="1"/><path d="M0.5 0.5 H15.5 V15.5 H0.5 Z M7.5 0.5 V15.5 M0.5 7.5 H15.5" stroke="#6a6a6a" stroke-width="1" stroke-dasharray="1 1" stroke-dashoffset="0.5"/><path d="M0 0.9 H16" stroke="#555" stroke-width="1.8"/></svg>
<div class="t" style="left:719px;top:176.83px;font-size:12.6px;color:#555;">To<span style="text-decoration:underline;text-underline-offset:2px">p</span> Border</div>
<svg style="position:absolute;left:693px;top:202px;" width="16" height="16" viewBox="0 0 16 16" fill="none"><path d="M0.5 0.5 H15.5 V15.5 H0.5 Z M7.5 0.5 V15.5 M0.5 7.5 H15.5" stroke="#c4c4c4" stroke-width="1"/><path d="M0.5 0.5 H15.5 V15.5 H0.5 Z M7.5 0.5 V15.5 M0.5 7.5 H15.5" stroke="#6a6a6a" stroke-width="1" stroke-dasharray="1 1" stroke-dashoffset="0.5"/><path d="M0.9 0 V16" stroke="#555" stroke-width="1.8"/></svg>
<div class="t" style="left:719px;top:205.13px;font-size:12.6px;color:#555;"><span style="text-decoration:underline;text-underline-offset:2px">L</span>eft Border</div>
<svg style="position:absolute;left:693px;top:230px;" width="16" height="16" viewBox="0 0 16 16" fill="none"><path d="M0.5 0.5 H15.5 V15.5 H0.5 Z M7.5 0.5 V15.5 M0.5 7.5 H15.5" stroke="#c4c4c4" stroke-width="1"/><path d="M0.5 0.5 H15.5 V15.5 H0.5 Z M7.5 0.5 V15.5 M0.5 7.5 H15.5" stroke="#6a6a6a" stroke-width="1" stroke-dasharray="1 1" stroke-dashoffset="0.5"/><path d="M15.1 0 V16" stroke="#555" stroke-width="1.8"/></svg>
<div class="t" style="left:719px;top:233.63px;font-size:12.6px;color:#555;"><span style="text-decoration:underline;text-underline-offset:2px">R</span>ight Border</div>
<svg style="position:absolute;left:693px;top:261px;" width="16" height="16" viewBox="0 0 16 16" fill="none"><path d="M0.5 0.5 H15.5 V15.5 H0.5 Z M7.5 0.5 V15.5 M0.5 7.5 H15.5" stroke="#c4c4c4" stroke-width="1"/><path d="M0.5 0.5 H15.5 V15.5 H0.5 Z M7.5 0.5 V15.5 M0.5 7.5 H15.5" stroke="#6a6a6a" stroke-width="1" stroke-dasharray="1 1" stroke-dashoffset="0.5"/></svg>
<div class="t" style="left:719px;top:264.83px;font-size:12.6px;color:#555;"><span style="text-decoration:underline;text-underline-offset:2px">N</span>o Border</div>
<svg style="position:absolute;left:693px;top:289.3px;" width="16" height="16" viewBox="0 0 16 16" fill="none"><path d="M0.9 0.9 H15.1 V15.1 H0.9 Z M8 0.9 V15.1 M0.9 8 H15.1" stroke="#444" stroke-width="1.8"/></svg>
<div class="t" style="left:719px;top:292.83px;font-size:12.6px;color:#555;"><span style="text-decoration:underline;text-underline-offset:2px">A</span>ll Borders</div>
<svg style="position:absolute;left:693px;top:318px;" width="16" height="16" viewBox="0 0 16 16" fill="none"><path d="M0.5 0.5 H15.5 V15.5 H0.5 Z M7.5 0.5 V15.5 M0.5 7.5 H15.5" stroke="#c4c4c4" stroke-width="1"/><path d="M0.5 0.5 H15.5 V15.5 H0.5 Z M7.5 0.5 V15.5 M0.5 7.5 H15.5" stroke="#6a6a6a" stroke-width="1" stroke-dasharray="1 1" stroke-dashoffset="0.5"/><path d="M0 0.9 H16" stroke="#555" stroke-width="1.8"/><path d="M0 15.1 H16" stroke="#555" stroke-width="1.8"/><path d="M0.9 0 V16" stroke="#555" stroke-width="1.8"/><path d="M15.1 0 V16" stroke="#555" stroke-width="1.8"/></svg>
<div class="t" style="left:719px;top:321.13px;font-size:12.6px;color:#555;">Out<span style="text-decoration:underline;text-underline-offset:2px">s</span>ide Borders</div>
<svg style="position:absolute;left:693px;top:346px;" width="16" height="16" viewBox="0 0 16 16" fill="none"><path d="M0.5 0.5 H15.5 V15.5 H0.5 Z M7.5 0.5 V15.5 M0.5 7.5 H15.5" stroke="#c4c4c4" stroke-width="1"/><path d="M0.5 0.5 H15.5 V15.5 H0.5 Z M7.5 0.5 V15.5 M0.5 7.5 H15.5" stroke="#6a6a6a" stroke-width="1" stroke-dasharray="1 1" stroke-dashoffset="0.5"/><path d="M0 7.5 H16" stroke="#555" stroke-width="1.3"/><path d="M7.5 0 V16" stroke="#555" stroke-width="1.3"/></svg>
<div class="t" style="left:719px;top:349.23px;font-size:12.6px;color:#555;"><span style="text-decoration:underline;text-underline-offset:2px">I</span>nside Borders</div>
<svg style="position:absolute;left:693px;top:376px;" width="16" height="16" viewBox="0 0 16 16" fill="none"><path d="M0.5 0.5 H15.5 V15.5 H0.5 Z M7.5 0.5 V15.5 M0.5 7.5 H15.5" stroke="#c4c4c4" stroke-width="1"/><path d="M0.5 0.5 H15.5 V15.5 H0.5 Z M7.5 0.5 V15.5 M0.5 7.5 H15.5" stroke="#6a6a6a" stroke-width="1" stroke-dasharray="1 1" stroke-dashoffset="0.5"/><path d="M0 7.5 H16" stroke="#555" stroke-width="1.3"/></svg>
<div class="t" style="left:719px;top:380.03px;font-size:12.6px;color:#555;">Inside <span style="text-decoration:underline;text-underline-offset:2px">H</span>orizontal Border</div>
<svg style="position:absolute;left:693px;top:405px;" width="16" height="16" viewBox="0 0 16 16" fill="none"><path d="M0.5 0.5 H15.5 V15.5 H0.5 Z M7.5 0.5 V15.5 M0.5 7.5 H15.5" stroke="#c4c4c4" stroke-width="1"/><path d="M0.5 0.5 H15.5 V15.5 H0.5 Z M7.5 0.5 V15.5 M0.5 7.5 H15.5" stroke="#6a6a6a" stroke-width="1" stroke-dasharray="1 1" stroke-dashoffset="0.5"/><path d="M7.5 0 V16" stroke="#555" stroke-width="1.3"/></svg>
<div class="t" style="left:719px;top:408.53px;font-size:12.6px;color:#555;">Inside <span style="text-decoration:underline;text-underline-offset:2px">V</span>ertical Border</div>
<svg style="position:absolute;left:693px;top:433px;" width="16" height="16" viewBox="0 0 16 16" fill="none"><rect x="0.5" y="0.5" width="15" height="15" fill="#f2f2f2" stroke="#ccc" stroke-width="1" stroke-dasharray="1 1"/><path d="M2 2 L14 14" stroke="#aaa" stroke-width="1.5"/></svg>
<div class="t" style="left:719px;top:436.63px;font-size:12.6px;color:#b3b3b3;">Diagonal Do<span style="text-decoration:underline;text-underline-offset:2px">w</span>n Border</div>
<svg style="position:absolute;left:693px;top:461.6px;" width="16" height="16" viewBox="0 0 16 16" fill="none"><rect x="0.5" y="0.5" width="15" height="15" fill="#f2f2f2" stroke="#ccc" stroke-width="1" stroke-dasharray="1 1"/><path d="M2 14 L14 2" stroke="#aaa" stroke-width="1.5"/></svg>
<div class="t" style="left:719px;top:465.13px;font-size:12.6px;color:#b3b3b3;">Diagonal <span style="text-decoration:underline;text-underline-offset:2px">U</span>p Border</div>
<svg style="position:absolute;left:692.5px;top:489.5px;" width="18" height="18" viewBox="0 0 18 18" fill="none"><path d="M0.8 7.5 L3.3 1 L5.8 7.5 M1.7 5.3 H4.9 M0.8 17 L3.3 10.5 L5.8 17 M1.7 14.8 H4.9" stroke="#666" stroke-width="1.1"/><path d="M7.5 1.8 H17.5 M7.5 5.5 H17.5 M7.5 13.3 H17.5" stroke="#555" stroke-width="1.5"/><path d="M0 9.3 H17.5" stroke="#4a90d9" stroke-width="1.5"/></svg>
<div class="t" style="left:720px;top:496.83px;font-size:12.6px;color:#333;">Hori<span style="text-decoration:underline;text-underline-offset:2px">z</span>ontal Line</div>
<svg style="position:absolute;left:693px;top:523.5px;" width="18" height="17" viewBox="0 0 18 17" fill="none"><rect x="0.6" y="2.6" width="15" height="13.5" fill="#fff" stroke="#555" stroke-width="1.2"/><path d="M0.6 9.3 H15.6 M8 2.6 V16" stroke="#555" stroke-width="1.1"/><path d="M7 12 L15 2 Q16.5 0.5 17.5 1.8 Q18 3 17 4 L9 13.5 L6.5 14.5 Z" fill="#fff" stroke="#2b7cd3" stroke-width="1.4"/></svg>
<div class="t" style="left:720px;top:527.33px;font-size:12.6px;color:#555;"><span style="text-decoration:underline;text-underline-offset:2px">D</span>raw Table</div>
<svg style="position:absolute;left:693px;top:554.7px;" width="17" height="15" viewBox="0 0 17 15" fill="none"><rect x="0.6" y="0.6" width="15.8" height="13.8" fill="#cfe4f7" stroke="#2b7cd3" stroke-width="1.2"/><path d="M4.6 0.6 V14.4 M8.5 0.6 V14.4 M12.5 0.6 V14.4 M0.6 5.2 H16.4 M0.6 9.8 H16.4" stroke="#2b7cd3" stroke-width="1.2"/></svg>
<div class="t" style="left:720px;top:558.03px;font-size:12.6px;color:#555;letter-spacing:-0.18px;">View <span style="text-decoration:underline;text-underline-offset:2px">G</span>ridlines</div>
<svg style="position:absolute;left:695px;top:583.5px;" width="14" height="17" viewBox="0 0 14 17" fill="none"><path d="M0.8 0.8 H8.5 L13.2 5.5 V16.2 H0.8 Z" fill="#f5c27a" stroke="#c5711f" stroke-width="1.4" stroke-linejoin="round"/><path d="M4 3.5 H8 L10.5 6.5 V13.5 H4 Z" fill="#fff"/><path d="M8.5 0.8 V5.5 H13.2" stroke="#c5711f" stroke-width="1.2"/></svg>
<div class="t" style="left:720px;top:587.63px;font-size:12.6px;color:#555;letter-spacing:-0.3px;">B<span style="text-decoration:underline;text-underline-offset:2px">o</span>rders and Shading...</div>
<div style="position:absolute;left:851px;top:528.3px;width:220px;height:72.7px;background:#fff;border:1px solid #c8c8c8;box-sizing:border-box;box-shadow:1px 1px 2px rgba(0,0,0,0.10)"></div>
<div class="t" style="left:863px;top:538.16px;font-size:12.1px;color:#444;font-weight:700;">Horizontal Line</div>
<div class="t" style="left:863px;top:560.80px;font-size:12.4px;color:#6a6a6a;">Add a horizontal line across the</div>
<div class="t" style="left:863px;top:577.00px;font-size:12.4px;color:#6a6a6a;">entire page, cell or column.</div>
<svg style="position:absolute;left:791px;top:507px;filter:drop-shadow(2px 2px 1.5px rgba(0,0,0,0.35))" width="42" height="51" viewBox="0 0 42 51" fill="none"><path d="M14.5 27 V5 Q14.5 1.5 18 1.5 Q21.5 1.5 21.5 5 V14.5 Q21.5 12.5 25.5 12.5 Q29.8 12.5 30.3 15.5 Q31 15.5 34.5 15.5 Q39.5 15.8 39.5 20.5 V36 Q39.5 48.5 27 48.5 Q20 48.5 15 43.5 L3 32.5 Q0.8 29.5 3 27.8 Q6 26 9 28.5 L14.5 33 Z" fill="#fff" stroke="#000" stroke-width="2.3" stroke-linejoin="round"/><path d="M21.5 14.5 V24 M30.3 15.5 V24" stroke="#000" stroke-width="2"/></svg>
<div style="position:absolute;left:0px;top:835px;width:1600px;height:1px;background:#dcdad8"></div>
<div class="t" style="left:7.5px;top:843.39px;font-size:11px;color:#555;">Page 1 of 1</div>
<div class="t" style="left:84.4px;top:843.39px;font-size:11px;color:#555;">63 words</div>
<div class="t" style="left:149.5px;top:843.64px;font-size:10.7px;color:#555;">English (United States)</div>
<svg style="position:absolute;left:277px;top:840px;" width="17" height="15" viewBox="0 0 17 15" fill="none"><rect x="0.6" y="0.6" width="13" height="13" stroke="#555" stroke-width="1.1"/><path d="M0.6 3.5 H13.6 M3 6 H7 M3 8.5 H7 M3 11 H7" stroke="#555" stroke-width="1"/><circle cx="12" cy="10" r="4" fill="#f3f2f1" stroke="#555" stroke-width="1.1"/><circle cx="12" cy="10" r="1.8" fill="#555"/></svg>
<svg style="position:absolute;left:1232px;top:839.5px;" width="16" height="16" viewBox="0 0 16 16" fill="none"><path d="M0.6 4 V0.6 H4 M12 0.6 H15.4 V4 M15.4 12 V15.4 H12 M4 15.4 H0.6 V12" stroke="#555" stroke-width="1.1"/><path d="M4 3 H9.5 L12 5.5 V13 H4 Z" stroke="#555" stroke-width="1.1" stroke-linejoin="round"/></svg>
<div class="t" style="left:1250.4px;top:842.79px;font-size:11px;color:#555;">Focus</div>
<svg style="position:absolute;left:1303px;top:839.5px;" width="15" height="14" viewBox="0 0 15 14" fill="none"><path d="M0.6 1 Q4 0 7.5 1.5 Q11 0 14.4 1 V13 Q11 12 7.5 13.5 Q4 12 0.6 13 Z M7.5 1.5 V13.5" stroke="#555" stroke-width="1.1"/><path d="M2.5 4 H5.5 M2.5 6.5 H5.5 M2.5 9 H5.5 M9.5 4 H12.5 M9.5 6.5 H12.5 M9.5 9 H12.5" stroke="#555" stroke-width="0.9"/></svg>
<div style="position:absolute;left:1331.5px;top:836px;width:42px;height:22px;background:#d2d0ce"></div>
<svg style="position:absolute;left:1346px;top:839.5px;" width="12" height="15" viewBox="0 0 12 15" fill="none"><rect x="0.6" y="0.6" width="10.8" height="13.8" stroke="#444" stroke-width="1.1"/><path d="M3 4 H9 M3 6.5 H9 M3 9 H9 M3 11.5 H9" stroke="#444" stroke-width="0.9"/></svg>
<svg style="position:absolute;left:1386.5px;top:839.5px;" width="16" height="16" viewBox="0 0 16 16" fill="none"><rect x="0.6" y="0.6" width="12" height="13" stroke="#555" stroke-width="1.1"/><path d="M0.6 3 H12.6 M3 6 H8 M3 8.5 H7 M3 11 H7" stroke="#555" stroke-width="0.9"/><circle cx="11.5" cy="11" r="4.2" fill="#555"/><path d="M11.5 10 V13.5 M11.5 8.3 V8.9" stroke="#fff" stroke-width="1.2"/></svg>
<div style="position:absolute;left:1420.5px;top:846px;width:8.5px;height:1.2px;background:#555"></div>
<div style="position:absolute;left:1434px;top:846.3px;width:104px;height:1px;background:#aaa"></div>
<div style="position:absolute;left:1486px;top:840.7px;width:6px;height:12.6px;background:#666;border-radius:1px"></div>
<div style="position:absolute;left:1543px;top:846px;width:8.5px;height:1.2px;background:#555"></div>
<div style="position:absolute;left:1546.6px;top:842.2px;width:1.2px;height:8.6px;background:#555"></div>
<div class="t" style="left:1565.6px;top:843.57px;font-size:10.2px;color:#555;">122%</div>
</body></html>
